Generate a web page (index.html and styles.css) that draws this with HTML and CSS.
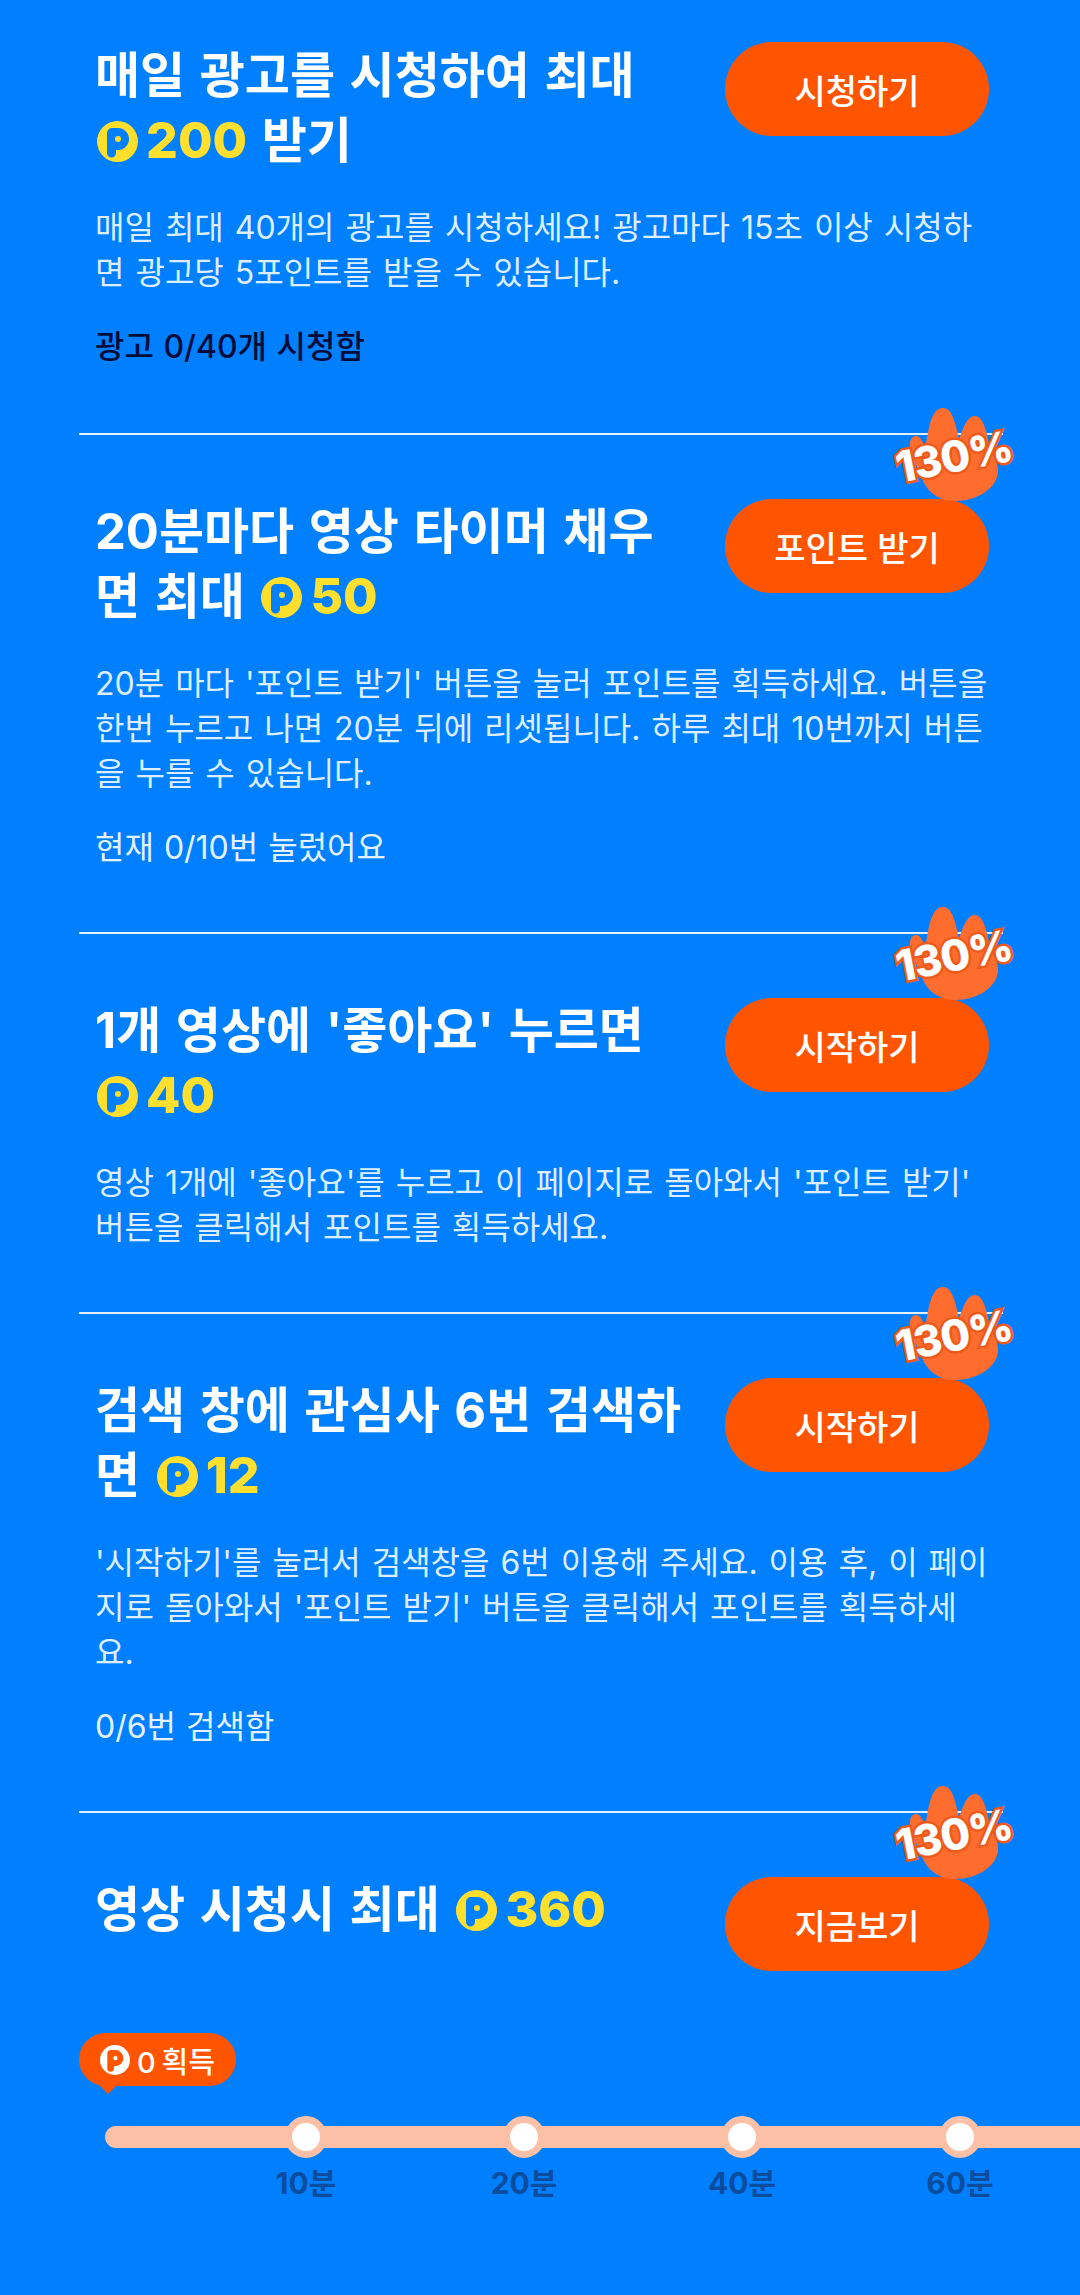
FILE: index.html
```html
<!DOCTYPE html>
<html lang="ko">
<head>
  <meta charset="UTF-8">
  <meta name="viewport" content="width=device-width, initial-scale=1">
  <title>포인트 받기</title>
  <link rel="stylesheet" href="styles.css">
</head>
<body>
  <svg class="defs" width="0" height="0">
    <symbol id="coin" viewBox="0 0 41 41">
      <circle cx="20.500" cy="20.500" r="20.500" fill="currentColor"/>
      <path fill="var(--p)" fill-rule="evenodd" d="M10 12a5 5 0 0 1 5-5h6a11 11 0 0 1 0 22h-2v3a4.500 4.500 0 0 1-9 0zM21 15a3 3 0 1 0 0 6 3 3 0 0 0 0-6z"/>
    </symbol>
    <symbol id="hand" viewBox="0 0 120 95">
      <path fill="#ff6d2e" d="M20 50C15 38 16 30 22 28 27 27 30 34 32 40 35 30 36 0 50 0 60 0 63 18 66 32 70 20 74 8 82 8 90 8 94 24 96 36 100 48 106 55 105 65 103 80 85 93 62 93 42 93 32 80 28 68 25 60 23 57 20 50z"/>
    </symbol>
  </svg>

  <div class="list">
    <section class="task task-first">
      <div class="task-head">
        <h2 class="task-title">매일 광고를 시청하여 최대<br><svg class="coin"><use href="#coin"/></svg><span class="amount">200</span> 받기</h2>
        <button class="btn">시청하기</button>
      </div>
      <p class="desc">매일 최대 40개의 광고를 시청하세요! 광고마다 15초 이상 시청하면 광고당 5포인트를 받을 수 있습니다.</p>
      <p class="status status-dark">광고 0/40개 시청함</p>
    </section>

    <section class="task">
      <div class="badge"><svg class="badge-hand"><use href="#hand"/></svg><span class="badge-text">130%</span></div>
      <div class="task-head">
        <h2 class="task-title">20분마다 영상 타이머 채우<br>면 최대 <svg class="coin"><use href="#coin"/></svg><span class="amount">50</span></h2>
        <button class="btn">포인트 받기</button>
      </div>
      <p class="desc">20분 마다 '포인트 받기' 버튼을 눌러 포인트를 획득하세요. 버튼을 한번 누르고 나면 20분 뒤에 리셋됩니다. 하루 최대 10번까지 버튼을 누를 수 있습니다.</p>
      <p class="status">현재 0/10번 눌렀어요</p>
    </section>

    <section class="task">
      <div class="badge"><svg class="badge-hand"><use href="#hand"/></svg><span class="badge-text">130%</span></div>
      <div class="task-head">
        <h2 class="task-title">1개 영상에 '좋아요' 누르면<br><svg class="coin"><use href="#coin"/></svg><span class="amount">40</span></h2>
        <button class="btn">시작하기</button>
      </div>
      <p class="desc">영상 1개에 '좋아요'를 누르고 이 페이지로 돌아와서 '포인트 받기' 버튼을 클릭해서 포인트를 획득하세요.</p>
    </section>

    <section class="task">
      <div class="badge"><svg class="badge-hand"><use href="#hand"/></svg><span class="badge-text">130%</span></div>
      <div class="task-head">
        <h2 class="task-title">검색 창에 관심사 6번 검색하<br>면 <svg class="coin"><use href="#coin"/></svg><span class="amount">12</span></h2>
        <button class="btn">시작하기</button>
      </div>
      <p class="desc">'시작하기'를 눌러서 검색창을 6번 이용해 주세요. 이용 후, 이 페이지로 돌아와서 '포인트 받기' 버튼을 클릭해서 포인트를 획득하세요.</p>
      <p class="status">0/6번 검색함</p>
    </section>

    <section class="task task-last">
      <div class="badge"><svg class="badge-hand"><use href="#hand"/></svg><span class="badge-text">130%</span></div>
      <div class="task-head">
        <h2 class="task-title">영상 시청시 최대 <svg class="coin"><use href="#coin"/></svg><span class="amount">360</span></h2>
        <button class="btn">지금보기</button>
      </div>
    </section>
  </div>

  <div class="progress">
    <div class="tip"><svg class="tip-coin"><use href="#coin"/></svg><span>0 획득</span></div>
    <div class="steps">
      <div class="step"><span class="dot"></span><span class="step-label">10분</span></div>
      <div class="step"><span class="dot"></span><span class="step-label">20분</span></div>
      <div class="step"><span class="dot"></span><span class="step-label">40분</span></div>
      <div class="step"><span class="dot"></span><span class="step-label">60분</span></div>
    </div>
  </div>
</body>
</html>
```

FILE: styles.css
```css
html, body {
  margin: 0;
  height: 2295px;
  overflow: hidden;
}
body {
  background-color: #0080ff;
  color: #fff;
  font-family: Inter, "Noto Sans CJK KR", sans-serif;
}
.defs {
  position: absolute;
}
.list {
  padding: 0 77px 0 79px;
}
.task {
  position: relative;
  padding: 64px 0 62px 16px;
  border-bottom: 2px solid #e3f1ff;
}
.task-first {
  padding-top: 43px;
  padding-bottom: 64px;
}
.task-last {
  border-bottom: none;
  padding-bottom: 0;
}
.task-head {
  display: flex;
  justify-content: space-between;
  align-items: flex-start;
}
.task-first .btn {
  margin-top: -1px;
}
.task-title {
  margin: 0;
  font-size: 49px;
  font-weight: 700;
  line-height: 65px;
  word-spacing: 3px;
  white-space: nowrap;
}
.coin {
  width: 41px;
  height: 41px;
  margin: 0 8px 0 2px;
  vertical-align: -4px;
  color: #ffdf2b;
  --p: #0080ff;
}
.amount {
  font-weight: 800;
  font-size: 50px;
  color: #ffe02e;
}
.btn {
  flex: none;
  width: 264px;
  height: 94px;
  margin-right: 14px;
  border: none;
  border-radius: 47px;
  background-color: #ff5500;
  color: #fff;
  font-family: inherit;
  font-size: 34px;
  font-weight: 500;
}
.desc {
  margin: 32px 0 0;
  width: 895px;
  font-size: 32px;
  line-height: 45px;
  word-spacing: 2px;
  color: #dceeff;
  word-break: break-all;
}
.status {
  margin: 29px 0 0;
  font-size: 32px;
  line-height: 45px;
  word-spacing: 1px;
  color: #e3f1ff;
}
.status-dark {
  color: #000c3a;
  font-weight: 500;
}

/* 130% sticker sits over the divider */
.badge {
  position: absolute;
  top: -27px;
  right: -10px;
  width: 120px;
  height: 95px;
}
.badge-hand {
  display: block;
  width: 120px;
  height: 95px;
}
.badge-text {
  position: absolute;
  left: 2px;
  top: 24px;
  transform: rotate(-11deg);
  font-weight: 800;
  font-size: 43px;
  letter-spacing: -1px;
  line-height: 48px;
  color: #fff;
  -webkit-text-stroke: 5px #ee5a1c;
  paint-order: stroke fill;
}

.progress {
  margin-top: 62px;
  padding-left: 79px;
}
.tip {
  position: relative;
  display: inline-flex;
  align-items: center;
  gap: 7px;
  height: 53px;
  padding: 0 21px;
  border-radius: 27px;
  background-color: #ff5500;
  font-size: 29px;
  font-weight: 500;
  word-spacing: -2px;
}
.tip::after {
  content: "";
  position: absolute;
  left: 19px;
  bottom: -8px;
  border: 10px solid transparent;
  border-top-color: #ff5500;
  border-bottom: none;
}
.tip-coin {
  width: 30px;
  height: 30px;
  color: #fff;
  --p: #ff5500;
}
.steps {
  position: relative;
  display: flex;
  margin: 30px 0 0 26px;
  padding-left: 92px;
}
.steps::before {
  content: "";
  position: absolute;
  left: 0;
  right: 0;
  top: 10px;
  height: 22px;
  border-radius: 11px 0 0 11px;
  background-color: #fcc0a6;
}
.step {
  position: relative;
  flex: none;
  width: 218px;
  display: flex;
  flex-direction: column;
  align-items: center;
  gap: 5px;
}
.dot {
  width: 28px;
  height: 28px;
  border: 7px solid #fcc0a6;
  border-radius: 50%;
  background-color: #fff;
}
.step-label {
  font-size: 30px;
  font-weight: 700;
  line-height: 40px;
  color: #0a4d9e;
}
```
